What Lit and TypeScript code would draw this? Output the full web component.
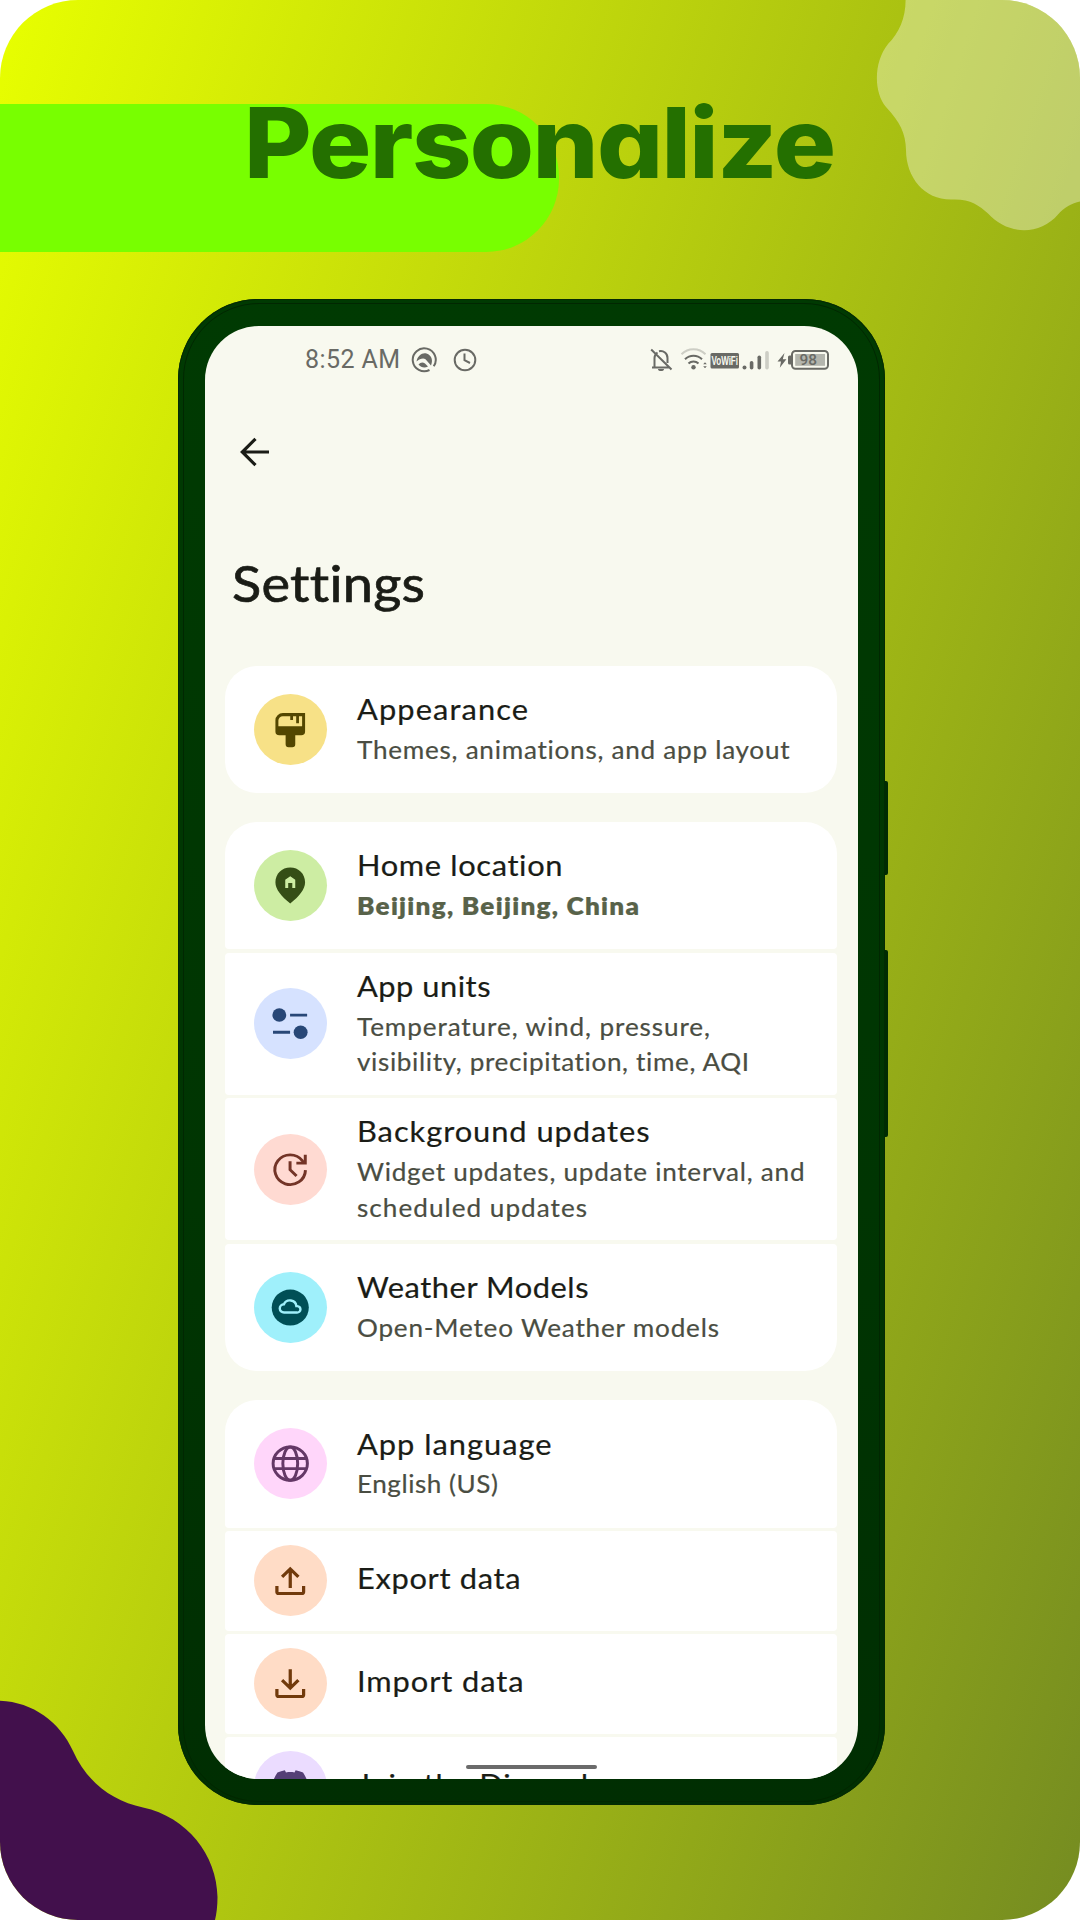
import { LitElement, html, svg, css } from "lit";
import { customElement, property } from "lit/decorators.js";
import { classMap } from "lit/directives/class-map.js";

type Tone = "yellow" | "green" | "blue" | "red" | "cyan" | "pink" | "peach" | "violet";

interface Line {
  text: string;
  width: number;
}

interface Setting {
  icon: keyof typeof icons;
  tone: Tone;
  size: "small" | "medium" | "large";
  title: Line;
  lines?: Line[];
  strong?: boolean;
}

const icons = {
  brush: svg`
    <path fill="currentColor" fill-rule="evenodd" d="M8 2.8H20V13a2.1 2.1 0 0 1-2.1 2.1H14.7v5.1a1.6 1.6 0 0 1-1.6 1.6h-2a1.6 1.6 0 0 1-1.6-1.6v-5.1H6.1A2.1 2.1 0 0 1 4 13V6.8a4 4 0 0 1 4-4zM8 4.6A2.4 2.4 0 0 0 5.6 7v3.1H18.4V4.6H16.7V8.5H15.2V4.6H13.5V6.6H12V4.6z"/>`,
  home: svg`
    <path fill="currentColor" fill-rule="evenodd" d="M12 2C7.5 2 4 5.5 4 10.2C4 14.2 7.2 18 12 22C16.8 18 20 14.2 20 10.2C20 5.5 16.5 2 12 2zM12 6.8L14.7 8.7V13.3H13.1V10.5H10.9V13.3H9.3V8.7z"/>`,
  units: svg`
    <g fill="currentColor">
      <circle cx="6.1" cy="7.2" r="3.75"/><path d="M11.9 6.5H21.1V8.1H11.9zM2.7 16H11.9V17.6H2.7z"/>
      <circle cx="17.6" cy="16.8" r="3.75"/>
    </g>`,
  update: svg`
    <g fill="none" stroke="currentColor" stroke-width="1.6">
      <path d="M20.2 12.3A8.25 8.25 0 1 1 18.6 7.200L19.6 8.3"/>
      <path d="M20.1 3.7V8.4H15.3M11.9 7.3V12.1L15.4 15.6"/>
    </g>`,
  weather: svg`
    <circle cx="12" cy="12" r="10" fill="currentColor"/>
    <path class="cut" d="M8.7 14.75H15.6a1.8 1.8 0 0 0 .2-3.6h-.5A3.5 3.5 0 0 0 8.6 10.15 2.3 2.3 0 0 0 8.7 14.75z"/>`,
  globe: svg`
    <g fill="none" stroke="currentColor" stroke-width="1.6">
      <circle cx="12" cy="12" r="9.25"/><ellipse cx="12" cy="12" rx="4" ry="9.25"/>
      <path d="M3.3 9.2H20.7M3.3 14.8H20.7"/>
    </g>`,
  upload: svg`
    <g fill="none" stroke="currentColor" stroke-width="1.75">
      <path d="M12 16.1V5.2M7.6 9.9L12 5.5L16.4 9.9M4.8 15V18.4a.8.8 0 0 0 .8.8H18.4a.8.8 0 0 0 .8-.8V15"/>
    </g>`,
  download: svg`
    <g fill="none" stroke="currentColor" stroke-width="1.75">
      <path d="M12 4V14.7M7.6 10.1L12 14.5L16.4 10.1M4.8 15V18.4a.8.8 0 0 0 .8.8H18.4a.8.8 0 0 0 .8-.8V15"/>
    </g>`,
  discord: svg`
    <path fill="currentColor" d="M18.9 4.2C17.6 3.6 16.3 3.2 14.9 2.9L14.3 4.1C12.8 3.9 11.2 3.9 9.7 4.1L9.1 2.9C7.7 3.2 6.4 3.6 5.1 4.2C2.5 8.1 1.7 12 2.1 15.8C3.7 17 5.3 17.7 6.9 18.2L7.9 16.5L6.6 15.8C10.1 17.4 13.9 17.4 17.4 15.8L16.1 16.5L17.1 18.2C18.7 17.7 20.3 17 21.9 15.8C22.4 11.4 21.1 7.6 18.9 4.2z"/>`,
};

const groups: Setting[][] = [
  [
    {
      icon: "brush", tone: "yellow", size: "medium",
      title: { text: "Appearance", width: 171 },
      lines: [{ text: "Themes, animations, and app layout", width: 433 }],
    },
  ],
  [
    {
      icon: "home", tone: "green", size: "medium", strong: true,
      title: { text: "Home location", width: 206 },
      lines: [{ text: "Beijing, Beijing, China", width: 282 }],
    },
    {
      icon: "units", tone: "blue", size: "large",
      title: { text: "App units", width: 133.5 },
      lines: [
        { text: "Temperature, wind, pressure,", width: 353 },
        { text: "visibility, precipitation, time, AQI", width: 393 },
      ],
    },
    {
      icon: "update", tone: "red", size: "large",
      title: { text: "Background updates", width: 292.5 },
      lines: [
        { text: "Widget updates, update interval, and", width: 447.5 },
        { text: "scheduled updates", width: 230 },
      ],
    },
    {
      icon: "weather", tone: "cyan", size: "medium",
      title: { text: "Weather Models", width: 231.5 },
      lines: [{ text: "Open-Meteo Weather models", width: 362 }],
    },
  ],
  [
    {
      icon: "globe", tone: "pink", size: "medium",
      title: { text: "App language", width: 194.5 },
      lines: [{ text: "English (US)", width: 141 }],
    },
    { icon: "upload", tone: "peach", size: "small", title: { text: "Export data", width: 163.5 } },
    { icon: "download", tone: "peach", size: "small", title: { text: "Import data", width: 166.5 } },
    { icon: "discord", tone: "violet", size: "small", title: { text: "Join the Discord", width: 231 } },
  ],
];

/** One line of text, widened by `stretch` and tracked so that it spans the given width. */
@customElement("tracked-text")
class TrackedText extends LitElement {
  static styles = css`
    :host {
      display: block;
      white-space: pre;
    }
    span {
      display: inline-block;
      transform-origin: 0 50%;
    }
  `;

  @property() text = "";
  @property({ type: Number }) width = 0;
  @property({ type: Number }) stretch = 1;

  firstUpdated() {
    document.fonts.ready.then(() => {
      const span = this.renderRoot.querySelector("span")!;
      const natural = span.getBoundingClientRect().width;
      const step = (this.width / this.stretch - natural) / (this.text.length - 1);
      span.style.letterSpacing = `${step.toFixed(3)}px`;
      span.style.transform = `scaleX(${this.stretch})`;
    });
  }

  render() {
    return html`<span>${this.text}</span>`;
  }
}

@customElement("setting-row")
class SettingRow extends LitElement {
  static styles = css`
    :host {
      display: block;
      border-radius: 4px;
    }
    .row {
      display: flex;
      align-items: center;
      gap: 30px;
      padding-left: 29px;
      background: #fff;
      border-radius: inherit;
    }
    .small { height: 99.3px; }
    .medium { height: 127.5px; }
    .large { height: 141.7px; }
    .badge {
      flex: none;
      display: grid;
      place-items: center;
      width: 73px;
      height: 71px;
      border-radius: 50%;
    }
    .badge svg {
      width: 44.5px;
      height: 43.2px;
    }
    .cut {
      fill: none;
      stroke: #9ff0fb;
      stroke-width: 1.3;
    }
    .yellow { background: #f7e187; color: #534600; }
    .green { background: #cdeda3; color: #354e16; }
    .blue { background: #d6e2ff; color: #284777; }
    .red { background: #ffdad2; color: #733427; }
    .cyan { background: #9ff0fb; color: #004f56; }
    .pink { background: #ffd6fa; color: #643866; }
    .peach { background: #ffdcc6; color: #713a0c; }
    .violet { background: #ebdcff; color: #543f76; }
    .copy {
      padding-bottom: 4px;
      font-size: 24.4px;
      line-height: 35.5px;
      color: #4a4d42;
      -webkit-text-stroke: 0.2px currentColor;
    }
    .title {
      font-size: 28.8px;
      line-height: 44.9px;
      color: #1a1c16;
    }
    .strong {
      font-weight: 800;
      color: #586249;
    }
  `;

  @property({ attribute: false }) item!: Setting;

  render() {
    const { icon, tone, size, title, lines = [], strong = false } = this.item;
    return html`
      <div class="row ${size}">
        <div class="badge ${tone}">
          <svg viewBox="0 0 24 24" preserveAspectRatio="none">${icons[icon]}</svg>
        </div>
        <div class="copy">
          <tracked-text class="title" stretch="1.07" .text=${title.text} .width=${title.width}></tracked-text>
          ${lines.map(
            (l) => html`<tracked-text
              class=${classMap({ strong })}
              stretch="1.07"
              .text=${l.text}
              .width=${l.width}
            ></tracked-text>`
          )}
        </div>
      </div>
    `;
  }
}

@customElement("status-bar")
class StatusBar extends LitElement {
  static styles = css`
    :host {
      display: flex;
      align-items: center;
      height: 30px;
      padding: 0 29px 0 100px;
      color: #696a65;
      font: 25px/30px Roboto, sans-serif;
    }
    svg {
      display: block;
      flex: none;
    }
    .time { width: 95px; }
    .agent { margin-left: 11px; }
    .clock { margin-left: 15.5px; }
    .signals { margin-left: auto; }
    .line {
      fill: none;
      stroke: currentColor;
      stroke-width: 2;
    }
    .faint { opacity: 0.3; }
    .vowifi {
      font: 700 12.5px "Liberation Sans", sans-serif;
      fill: #f8f9ef;
    }
    .level { font: 500 15px Roboto, sans-serif; }
  `;

  render() {
    return html`
      <tracked-text class="time" text="8:52 AM" width="95"></tracked-text>
      <svg class="agent" width="26" height="26" viewBox="0 0 26 26" fill="currentColor">
        <path class="line" d="M18.5 23A11.5 11.5 0 1 1 22.700 19.300"/>
        <path d="M5.500 14.500C6.500 8.500 11.500 5.200 15.500 6.500C20.800 8.300 22.200 13.500 20 18.500L14.500 12.200C12 10.600 8.500 12 5.500 14.500z"/>
        <path d="M7.500 17.500C9.500 15 12 14.800 14 16.500L17 19.500C13.500 21.200 10 20.500 7.500 17.500z"/>
      </svg>
      <svg class="clock" width="24" height="24" viewBox="0 0 24 24">
        <circle class="line" cx="12" cy="12" r="10.3"/>
        <path class="line" d="M11.5 5.5V12.2L17 15"/>
      </svg>
      <svg class="signals" width="179" height="26" viewBox="0 0 179 26" fill="currentColor">
        <path class="line" d="M2 20.5H19M4.5 20V11A6.5 6.5 0 0 1 7.5 5.5M9 4.2A6.8 6.8 0 0 1 17.5 11V16M1.2 2.5L21.5 22.5"/>
        <path d="M8 22H14A3 2 0 0 1 8 22z"/>
        <path class="line faint" d="M31.5 7.2A17 17 0 0 1 55.5 7.2"/>
        <path class="line" d="M35 12.3A12 12 0 0 1 52 12.3M38.5 16.5A7 7 0 0 1 48.5 16.5"/>
        <circle cx="43.5" cy="20.3" r="2.2"/>
        <path d="M53.2 17.2L55 15.2L56.8 17.2zM53.2 19.2L55 21.2L56.8 19.2z"/>
        <rect x="60.5" y="6" width="28.500" height="15.5" rx="1.5"/>
        <text class="vowifi" x="61.5" y="18.200" textLength="26.5" lengthAdjust="spacingAndGlyphs">VoWiFi</text>
        <circle cx="94.5" cy="20.5" r="2"/>
        <rect x="99.8" y="14" width="3.6" height="8.5" rx="1.8"/>
        <rect x="107.5" y="8.5" width="3.6" height="14" rx="1.8"/>
        <rect class="faint" x="115.2" y="4" width="3.6" height="18.5" rx="1.8"/>
        <path d="M134.500 6L127.5 14.4H131L129.8 20.8L136.400 12.3H132.8z"/>
        <path d="M141 8.5V17.5H139.5A1.5 1.5 0 0 1 138 16V10A1.5 1.5 0 0 1 139.5 8.5z"/>
        <rect class="line" x="142" y="4" width="36" height="17.8" rx="3.5"/>
        <rect x="145.2" y="7" width="29.8" height="11.8" opacity=".48"/>
        <text class="level" x="149.500" y="18.200" textLength="17.5" lengthAdjust="spacingAndGlyphs">98</text>
      </svg>
    `;
  }
}

@customElement("app-root")
class AppRoot extends LitElement {
  static styles = css`
    :host {
      display: block;
      width: 1080px;
      height: 1920px;
      background: #fff;
    }
    .poster {
      position: relative;
      box-sizing: border-box;
      height: 1920px;
      padding-top: 104px;
      overflow: hidden;
      border-radius: 78px;
      background: linear-gradient(108deg, #e8ff00, #758c21);
      font-family: Lato, sans-serif;
    }
    .shapes {
      position: absolute;
      inset: 0;
    }
    .banner {
      position: relative;
      width: 559px;
      height: 148px;
      border-radius: 0 73px 73px 0;
      background: #78ff00;
    }
    .headline {
      position: absolute;
      left: 244px;
      top: -26px;
      color: #247000;
      font: 800 97px/130px Inter, sans-serif;
      font-feature-settings: "cv11";
    }
    .phone {
      position: relative;
      box-sizing: border-box;
      width: 707px;
      height: 1506px;
      margin: 47px 0 0 178px;
      padding: 27px 27.5px 26.5px 27px;
      border-radius: 80px;
      background: linear-gradient(#003a02, #003502 60%, #002e02);
      box-shadow: inset 0 0 0 1px #052a03;
    }
    .rim {
      position: absolute;
      inset: 3.5px 5px;
      border: 1px solid #012701;
      border-radius: 76px;
    }
    .key {
      position: absolute;
      left: 706px;
      width: 4px;
      border-radius: 0 2px 2px 0;
      background: #002b02;
    }
    .power { top: 482px; height: 94px; }
    .volume { top: 651px; height: 187px; }
    .screen {
      position: relative;
      height: 1452.5px;
      overflow: hidden;
      border-radius: 54px;
      background: #f8f9ef;
    }
    .status { margin-top: 19px; }
    .back {
      display: block;
      margin: 61px 0 0 34px;
    }
    h1 {
      margin: 85px 0 0 27px;
      font-size: 50.5px;
      line-height: 60px;
      font-weight: 400;
      color: #1a1c16;
      -webkit-text-stroke: 0.7px #1a1c16;
    }
    .list {
      display: flex;
      flex-direction: column;
      gap: 28.8px;
      margin: 52.5px 20.5px 0 20px;
    }
    .group {
      display: flex;
      flex-direction: column;
      gap: 3.7px;
    }
    .group setting-row:first-child {
      border-top-left-radius: 32px;
      border-top-right-radius: 32px;
    }
    .group setting-row:last-child {
      border-bottom-left-radius: 32px;
      border-bottom-right-radius: 32px;
    }
    .handle {
      position: absolute;
      left: 260.7px;
      bottom: 9.5px;
      width: 131px;
      height: 3.6px;
      border-radius: 2px;
      background: #6b6b6b;
    }
  `;

  render() {
    return html`
      <div class="poster">
        <svg class="shapes" width="1080" height="1920" viewBox="0 0 1080 1920">
          <path fill="#fff" fill-opacity=".36" d="M905.6 0C905.6 18 899 33 888 44C873.5 62 873.5 92 886 107C900 122 905.6 133 906 150C906 177 924 199.6 951 199.6C969 198.5 979 205 988 213.5C1008 235.5 1040 235.5 1058 214.5C1064 207.5 1072 203 1080 201.5V0z"/>
          <path fill="#42104c" d="M0 1700.7C33 1702 60 1722 73 1751C87 1782 112 1801 143 1807.5C187 1817 217 1855 217.5 1897C217.5 1906 216.5 1914 215 1920H0z"/>
        </svg>
        <div class="banner">
          <tracked-text class="headline" text="Personalize" width="592" stretch="1.07"></tracked-text>
        </div>
        <div class="phone">
          <div class="rim"></div>
          <div class="key power"></div>
          <div class="key volume"></div>
          <div class="screen">
            <status-bar class="status"></status-bar>
            <svg class="back" width="32" height="32" viewBox="0 0 32 32" fill="none" stroke="#1a1c16" stroke-width="3.2">
              <path d="M30 16H4M16.5 2.8L3.3 16L16.5 29.2"/>
            </svg>
            <h1><tracked-text text="Settings" width="191.5" stretch="1.07"></tracked-text></h1>
            <div class="list">
              ${groups.map(
                (rows) => html`
                  <div class="group">
                    ${rows.map((item) => html`<setting-row .item=${item}></setting-row>`)}
                  </div>
                `
              )}
            </div>
            <div class="handle"></div>
          </div>
        </div>
      </div>
    `;
  }
}
